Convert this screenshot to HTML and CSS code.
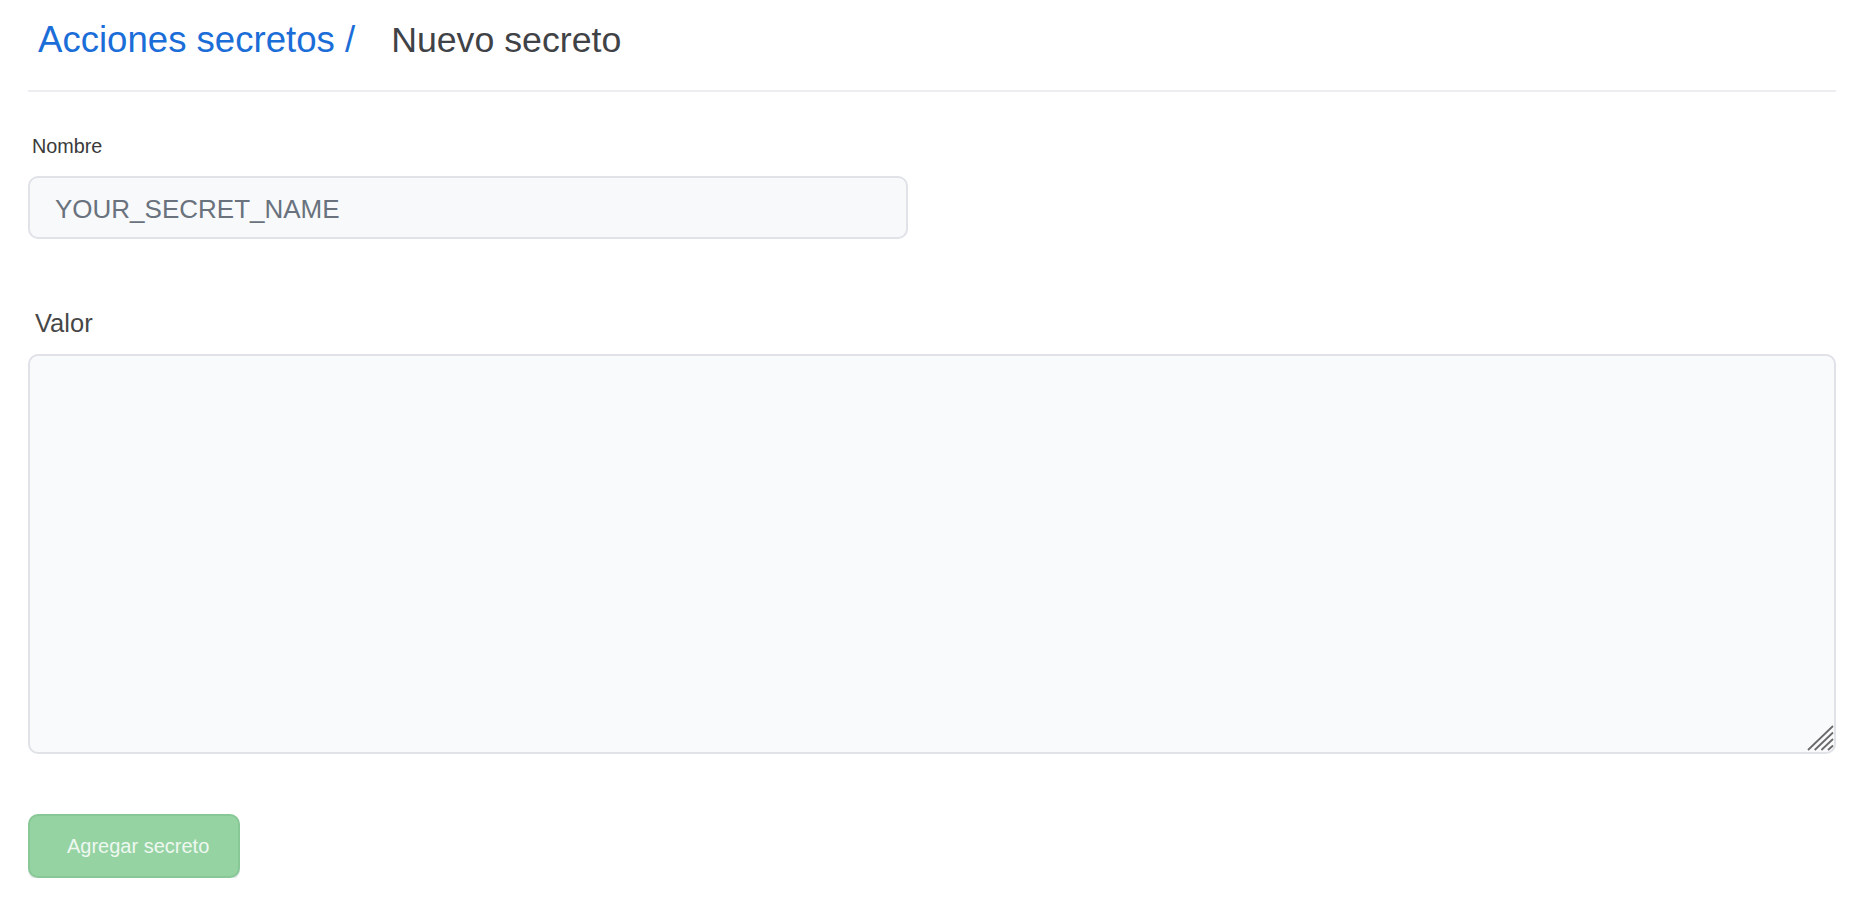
FILE: index.html
```html
<!DOCTYPE html>
<html lang="es">
<head>
<meta charset="utf-8">
<title>Nuevo secreto</title>
<link rel="stylesheet" href="styles.css">
</head>
<body>
<div class="page">
  <header class="header">
    <a class="crumb" href="#">Acciones secretos /</a>
    <span class="current">Nuevo secreto</span>
  </header>
  <form class="form">
    <div class="field field-name">
      <label class="label-small" for="name">Nombre</label>
      <input class="input" id="name" type="text" placeholder="YOUR_SECRET_NAME">
    </div>
    <div class="field field-value">
      <label class="label-large" for="value">Valor</label>
      <div class="textarea-wrap">
        <textarea class="textarea" id="value"></textarea>
        <svg class="grip" width="27" height="26" viewBox="0 0 27 26" aria-hidden="true">
          <path d="M26 1 L1 25 M26 7.5 L7.7 25 M26 14 L14.4 25 M26 20.5 L21 25" stroke="#6a6a6a" stroke-width="1.8" fill="none"/>
        </svg>
      </div>
    </div>
    <button class="btn" type="submit" disabled>Agregar secreto</button>
  </form>
</div>
</body>
</html>
```
FILE: styles.css
```css
html, body {
  margin: 0;
  padding: 0;
  background: #ffffff;
}

body {
  font-family: "Liberation Sans", Arial, Helvetica, sans-serif;
  color: #333333;
}

.page {
  padding: 0 30px 0 28px;
}

.header {
  display: flex;
  align-items: baseline;
  gap: 36px;
  padding: 18px 0 28px 10px;
  border-bottom: 2px solid #ececf1;
  font-size: 36px;
  line-height: 43px;
}

.crumb {
  font-size: 36.6px;
  color: #1b6dd8;
  text-decoration: none;
}

.current {
  font-size: 35.7px;
  color: #3f4246;
}

.form {
  display: flex;
  flex-direction: column;
  align-items: flex-start;
  padding-top: 43px;
}

.field {
  display: flex;
  flex-direction: column;
  align-self: stretch;
}

.label-small {
  font-size: 19.8px;
  line-height: 22px;
  color: #3a3a3a;
  padding-left: 4px;
  margin-bottom: 19px;
}

.input {
  box-sizing: border-box;
  width: 880px;
  height: 63px;
  border: 2px solid #e0e2e7;
  border-radius: 10px;
  background: #f8f9fb;
  padding: 4px 24px 0 25px;
  font-family: "Liberation Sans", Arial, Helvetica, sans-serif;
  font-size: 26px;
  color: #333333;
  outline: none;
}

.input::placeholder {
  color: #69727d;
  opacity: 1;
}

.field-value {
  margin-top: 70px;
}

.label-large {
  font-size: 25.5px;
  line-height: 28px;
  color: #474747;
  padding-left: 7px;
  margin-bottom: 17px;
}

.textarea-wrap {
  position: relative;
  display: flex;
}

.textarea {
  box-sizing: border-box;
  width: 100%;
  height: 400px;
  border: 2px solid #e0e2e7;
  border-radius: 10px;
  background: #f9fafc;
  resize: none;
  outline: none;
  font-family: "Liberation Sans", Arial, Helvetica, sans-serif;
  font-size: 20px;
  padding: 12px 20px;
  margin: 0;
}

.grip {
  position: absolute;
  right: 2px;
  bottom: 3px;
  pointer-events: none;
}

.btn {
  box-sizing: border-box;
  margin-top: 60px;
  height: 64px;
  padding: 1px 29px 0 37px;
  border: 2px solid #88c897;
  border-radius: 10px;
  background: #95d3a3;
  color: #eef8f0;
  font-family: "Liberation Sans", Arial, Helvetica, sans-serif;
  font-size: 20px;
  box-shadow: 0 2px 0 #e6e8eb;
  cursor: default;
}
```
